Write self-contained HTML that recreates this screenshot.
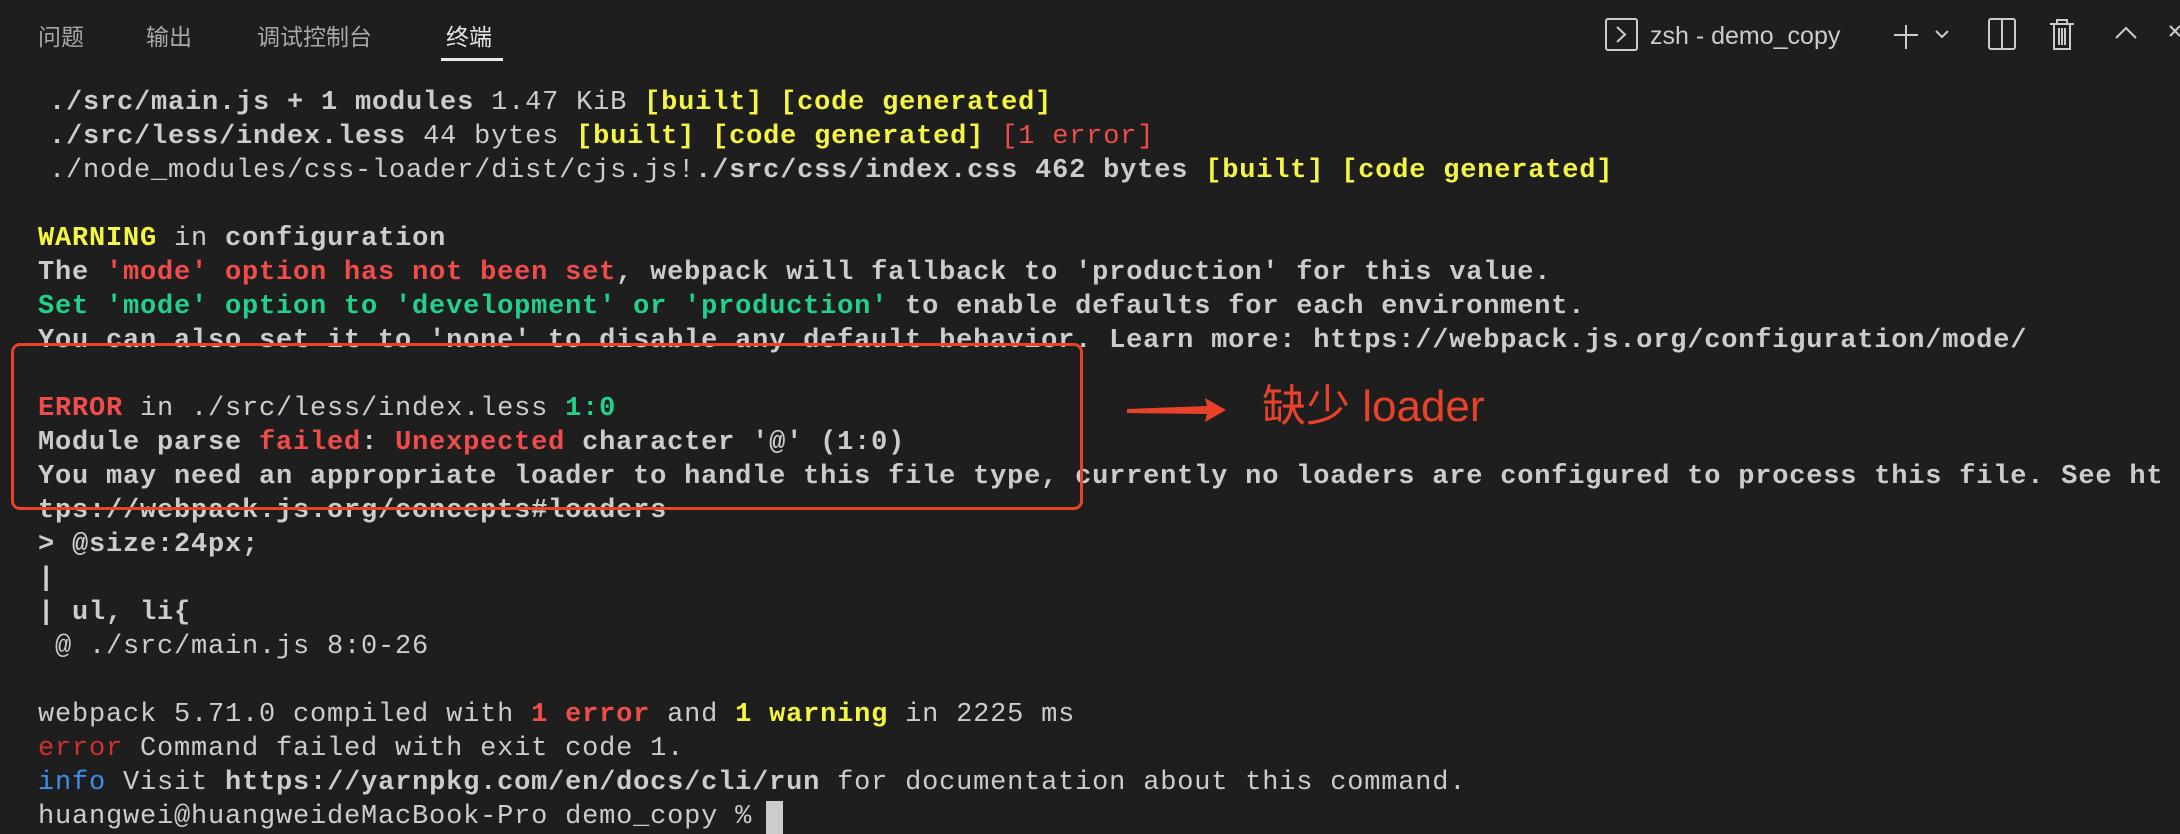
<!DOCTYPE html>
<html><head><meta charset="utf-8"><style>
html,body{margin:0;padding:0;background:#1e1e1e;width:2180px;height:834px;overflow:hidden;position:relative}
.tab{position:absolute;top:20px;font-family:"Liberation Sans","Noto Sans CJK SC",sans-serif;font-size:23px;color:#a9a9a9;line-height:34px}
.l{position:absolute;left:38px;font-family:"Liberation Mono","DejaVu Sans Mono",monospace;font-size:27px;letter-spacing:0.8px;color:#cccccc;white-space:pre;line-height:34px;font-weight:bold}
.n{font-weight:normal}
.y{color:#f5f543}.r{color:#f14c4c}.g{color:#23d18b}.b{color:#3b8eea}.dr{color:#cd3131}
</style></head><body>
<div class="tab" style="left:38px">问题</div>
<div class="tab" style="left:146px">输出</div>
<div class="tab" style="left:257px">调试控制台</div>
<div class="tab" style="left:446px;color:#e7e7e7">终端</div>
<div style="position:absolute;left:441px;top:58px;width:62px;height:3px;background:#e7e7e7"></div>

<svg style="position:absolute;left:1600px;top:16px" width="580" height="42" viewBox="1600 16 580 42" fill="none" stroke="#cccccc" stroke-width="2">
<rect x="1606" y="19" width="31" height="31" rx="2"/>
<path d="M1617 27l8 7.5-8 7.5"/>
<path d="M1906 25v24M1894 35h24"/>
<path d="M1936 31l6 6 6-6"/>
<rect x="1989" y="19" width="26" height="30" rx="2"/><path d="M2002 19v30"/>
<path d="M2050 24h24M2057 24v-4h10v4M2054 24v25h16v-25M2059 28v17M2062 28v17M2065 28v17"/>
<path d="M2116 38l10-10 10 10"/>
<path d="M2170 26l10 10M2180 26l-10 10"/>
</svg>
<div class="tab" style="left:1650px;top:19px;color:#cccccc;font-size:25px">zsh - demo_copy</div>

<div class="l" style="top:86px;left:49px">./src/main.js + 1 modules <span class="n">1.47 KiB</span> <span class="y">[built] [code generated]</span></div>
<div class="l" style="top:120px;left:49px">./src/less/index.less <span class="n">44 bytes</span> <span class="y">[built] [code generated]</span> <span class="r n">[1 error]</span></div>
<div class="l" style="top:154px;left:49px"><span class="n">./node_modules/css-loader/dist/cjs.js!</span>./src/css/index.css <span>462 bytes</span> <span class="y">[built] [code generated]</span></div>
<div class="l" style="top:222px"><span class="y">WARNING</span><span class="n"> in </span>configuration</div>
<div class="l" style="top:256px">The <span class="r">'mode' option has not been set</span>, webpack will fallback to 'production' for this value.</div>
<div class="l" style="top:290px"><span class="g">Set 'mode' option to 'development' or 'production'</span> to enable defaults for each environment.</div>
<div class="l" style="top:324px">You can also set it to 'none' to disable any default behavior. Learn more: https://webpack.js.org/configuration/mode/</div>
<div class="l" style="top:392px"><span class="r">ERROR</span><span class="n"> in ./src/less/index.less </span><span class="g">1:0</span></div>
<div class="l" style="top:426px">Module parse <span class="r">failed</span>: <span class="r">Unexpected</span> character '@' (1:0)</div>
<div class="l" style="top:460px">You may need an appropriate loader to handle this file type, currently no loaders are configured to process this file. See ht</div>
<div class="l" style="top:494px">tps://webpack.js.org/concepts#loaders</div>
<div class="l" style="top:528px">&gt; @size:24px;</div>
<div class="l" style="top:562px">|</div>
<div class="l" style="top:596px">| ul, li{</div>
<div class="l n" style="top:630px"> @ ./src/main.js 8:0-26</div>
<div class="l n" style="top:698px">webpack 5.71.0 compiled with <b class="r">1 error</b> and <b class="y">1 warning</b> in 2225 ms</div>
<div class="l n" style="top:732px"><span class="dr">error</span> Command failed with exit code 1.</div>
<div class="l n" style="top:766px"><span class="b">info</span> Visit <b>https://yarnpkg.com/en/docs/cli/run</b> for documentation about this command.</div>
<div class="l n" style="top:800px">huangwei@huangweideMacBook-Pro demo_copy % </div>
<div style="position:absolute;left:766px;top:801px;width:17px;height:33px;background:#cccccc"></div>

<div style="position:absolute;left:11px;top:343px;width:1066px;height:161px;border:3px solid #e8432a;border-radius:9px"></div>
<svg style="position:absolute;left:1120px;top:395px" width="110" height="32" viewBox="1120 395 110 32">
<path d="M1127 409 L1207 406 L1205 398 L1226 410 L1205 422 L1207 414 L1127 413 Z" fill="#e8432a"/>
</svg>
<div style="position:absolute;left:1262px;top:380px;font-family:'Liberation Sans','Noto Sans CJK SC',sans-serif;font-size:44px;line-height:54px;color:#e8432a">缺少 loader</div>
</body></html>
